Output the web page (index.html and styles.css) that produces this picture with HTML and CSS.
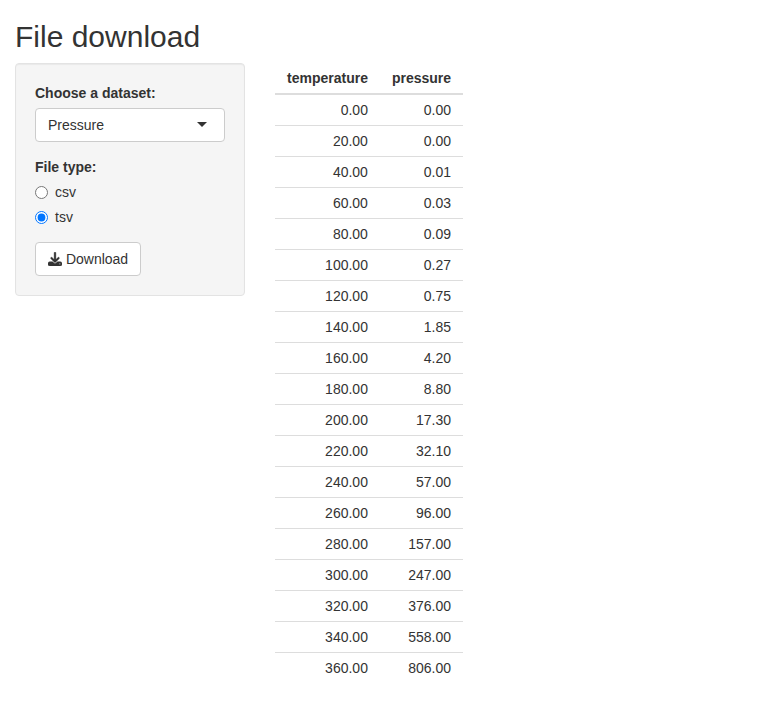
FILE: index.html
```html
<!DOCTYPE html>
<html lang="en">
<head>
<meta charset="utf-8">
<title>File download</title>
<link rel="stylesheet" href="styles.css">
</head>
<body>
<div class="container">
<h2>File download</h2>
<div class="row">
<form class="well">
<div class="form-group">
<label class="control-label" id="dataset-label">Choose a dataset:</label>
<div class="select" role="combobox" aria-labelledby="dataset-label" tabindex="0"><span>Pressure</span><i class="caret"></i></div>
</div>
<div class="form-group radios">
<label class="control-label">File type:</label>
<label class="radio"><input type="radio" name="filetype"><span>csv</span></label>
<label class="radio"><input type="radio" name="filetype" checked><span>tsv</span></label>
</div>
<a class="btn"><svg class="icon" viewBox="0 0 512 512" aria-hidden="true"><path d="M288 32c0-17.700-14.300-32-32-32s-32 14.300-32 32V274.700l-73.400-73.400c-12.500-12.500-32.800-12.500-45.300 0s-12.500 32.800 0 45.300l128 128c12.500 12.500 32.800 12.500 45.300 0l128-128c12.500-12.500 12.500-32.800 0-45.300s-32.800-12.500-45.300 0L288 274.700V32zM64 352c-35.300 0-64 28.700-64 64v32c0 35.300 28.700 64 64 64H448c35.300 0 64-28.700 64-64V416c0-35.300-28.700-64-64-64H346.500l-45.300 45.300c-25 25-65.500 25-90.500 0L165.500 352H64zm368 56a24 24 0 1 1 0 48 24 24 0 1 1 0-48z"/></svg> Download</a>
</form>
<div class="main">
<table>
<thead><tr><th>temperature</th><th>pressure</th></tr></thead>
<tbody>
<tr><td>0.00</td><td>0.00</td></tr>
<tr><td>20.00</td><td>0.00</td></tr>
<tr><td>40.00</td><td>0.01</td></tr>
<tr><td>60.00</td><td>0.03</td></tr>
<tr><td>80.00</td><td>0.09</td></tr>
<tr><td>100.00</td><td>0.27</td></tr>
<tr><td>120.00</td><td>0.75</td></tr>
<tr><td>140.00</td><td>1.85</td></tr>
<tr><td>160.00</td><td>4.20</td></tr>
<tr><td>180.00</td><td>8.80</td></tr>
<tr><td>200.00</td><td>17.30</td></tr>
<tr><td>220.00</td><td>32.10</td></tr>
<tr><td>240.00</td><td>57.00</td></tr>
<tr><td>260.00</td><td>96.00</td></tr>
<tr><td>280.00</td><td>157.00</td></tr>
<tr><td>300.00</td><td>247.00</td></tr>
<tr><td>320.00</td><td>376.00</td></tr>
<tr><td>340.00</td><td>558.00</td></tr>
<tr><td>360.00</td><td>806.00</td></tr>
</tbody>
</table>
</div>
</div>
</div>
</body>
</html>
```
FILE: styles.css
```css
* { box-sizing: border-box; }
body {
  margin: 0;
  font: 14px/1.42857143 "Liberation Sans", Arial, sans-serif;
  color: #333;
  background: #fff;
}
.container { padding: 0 15px; }
h2 {
  margin: 20px 0 10px;
  font-size: 30px;
  font-weight: 500;
  line-height: 1.1;
}
.row { display: flex; align-items: flex-start; gap: 30px; }
.well {
  width: 230px;
  min-height: 20px;
  padding: 19px;
  background: #f5f5f5;
  border: 1px solid #e3e3e3;
  border-radius: 4px;
  box-shadow: inset 0 1px 1px rgba(0, 0, 0, .05);
}
.form-group { margin-bottom: 15px; }
.control-label { display: block; margin-bottom: 5px; font-weight: 700; }
.select {
  display: flex;
  align-items: center;
  justify-content: space-between;
  height: 34px;
  padding: 6px 17px 6px 12px;
  border: 1px solid #ccc;
  border-radius: 4px;
  background: #fff;
}
.caret {
  margin-bottom: 1px;
  border: 5px solid transparent;
  border-top-color: #333;
  border-bottom: 0;
}
.radio { display: flex; margin-bottom: 5px; }
.radio input { margin: 4px 7px 0 0; width: 13px; height: 13px; }
.btn {
  display: inline-block;
  padding: 6px 12px;
  border: 1px solid #ccc;
  border-radius: 4px;
  background: #fff;
  vertical-align: middle;
}
.icon {
  width: 14px;
  height: 14px;
  vertical-align: -1.75px;
  fill: #333;
  stroke: #333;
  stroke-width: 14px;
}
table { border-collapse: collapse; border-spacing: 0; }
th, td {
  padding: 5px 12px;
  text-align: right;
  border-top: 1px solid #ddd;
}
th { border-top: 0; border-bottom: 2px solid #ddd; }
```
